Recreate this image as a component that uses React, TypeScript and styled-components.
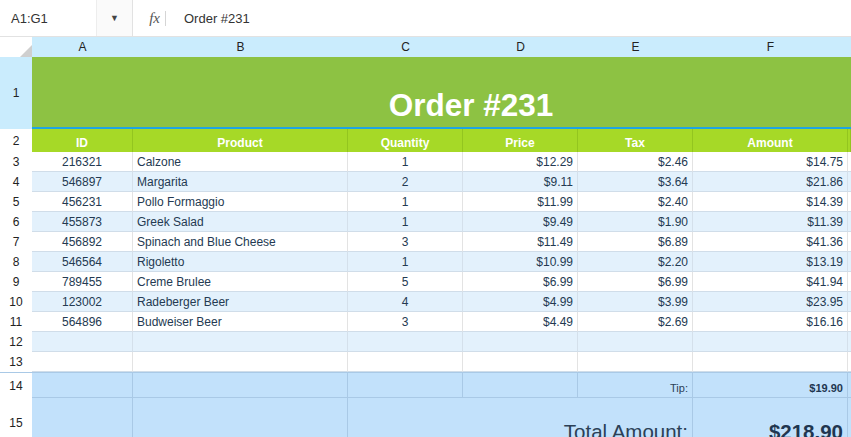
import React from "react";
import styled, { createGlobalStyle } from "styled-components";

const Global = createGlobalStyle`
  html, body { margin: 0; padding: 0; background: #fff; overflow: hidden; }
  body { font-family: "Liberation Sans", Arial, sans-serif; }
`;

const COLS = "32px 101px 215px 115px 115px 115px 155px 1fr";

const Page = styled.div`
  width: 851px;
  height: 437px;
  overflow: hidden;
  display: flex;
  flex-direction: column;
`;

const Toolbar = styled.div`
  height: 37px;
  flex: none;
  display: flex;
  align-items: stretch;
  border-bottom: 1px solid #e2e2e2;
  box-sizing: border-box;
  font-size: 13px;
  color: #333;
`;

const NameBox = styled.div`
  width: 96px;
  display: flex;
  align-items: center;
  padding-left: 11px;
  box-sizing: border-box;
`;

const Drop = styled.div`
  width: 37px;
  display: flex;
  align-items: center;
  justify-content: center;
  background: #fafafa;
  border-left: 1px solid #ededed;
  border-right: 1px solid #e2e2e2;
  box-sizing: border-box;
  font-size: 9px;
  color: #444;
`;

const Fx = styled.div`
  width: 33px;
  display: flex;
  align-items: center;
  justify-content: flex-end;
  font-family: "Liberation Serif", "Times New Roman", serif;
  font-style: italic;
  font-size: 15px;
  color: #555;
  gap: 5px;
  &::after {
    content: "";
    width: 1px;
    height: 15px;
    background: #d5d5d5;
  }
`;

const Formula = styled.div`
  display: flex;
  align-items: center;
  padding-left: 18px;
`;

const Sheet = styled.div`
  flex: 1;
  display: flex;
  flex-direction: column;
`;

const Row = styled.div<{ $h: number }>`
  display: grid;
  grid-template-columns: ${COLS};
  height: ${(p) => p.$h}px;
  flex: none;
`;

const Corner = styled.div`
  background: #fff;
  position: relative;
  &::after {
    content: "";
    position: absolute;
    right: 0;
    bottom: 0;
    border-style: solid;
    border-width: 0 0 12px 12px;
    border-color: transparent transparent #cfcfcf transparent;
  }
`;

const ColHead = styled.div`
  background: #caecfd;
  display: flex;
  align-items: center;
  justify-content: center;
  font-size: 12px;
  color: #222;
`;

const RowHead = styled.div<{ $sel?: boolean }>`
  background: ${(p) => (p.$sel ? "#caecfd" : "#fff")};
  display: flex;
  align-items: center;
  justify-content: center;
  font-size: 12px;
  color: #222;
`;

const TitleCell = styled.div`
  grid-column: 2 / 8;
  background: #8dc243;
  display: flex;
  align-items: flex-end;
  justify-content: center;
  padding-bottom: 3px;
  padding-left: 62px;
  box-sizing: border-box;
  color: #fff;
  font-weight: bold;
  font-size: 31.5px;
  border-bottom: 2px solid #1ea5e3;
`;

const Green = styled.div`
  background: #8dc243;
  border-bottom: 2px solid #1ea5e3;
`;

const HeadCell = styled.div`
  background: #a6d927;
  border-right: 1px solid #93c51f;
  display: flex;
  align-items: flex-end;
  justify-content: center;
  padding-bottom: 2px;
  box-sizing: border-box;
  color: #fff;
  font-weight: bold;
  font-size: 12px;
`;

type Align = "left" | "center" | "right";

const Cell = styled.div<{ $alt?: boolean; $align?: Align }>`
  background: ${(p) => (p.$alt ? "#e3f1fc" : "#fff")};
  border-right: 1px solid ${(p) => (p.$alt ? "#d4e0eb" : "#e3e3e3")};
  border-bottom: 1px solid #d0dde9;
  box-sizing: border-box;
  display: flex;
  align-items: flex-end;
  justify-content: ${(p) =>
    p.$align === "right" ? "flex-end" : p.$align === "center" ? "center" : "flex-start"};
  padding: 0 4px 2px 4px;
  font-size: 12px;
  color: #243a52;
  white-space: nowrap;
  overflow: hidden;
`;

const SumCell = styled.div<{ $span?: string; $align?: Align; $big?: boolean; $bold?: boolean }>`
  grid-column: ${(p) => p.$span || "auto"};
  background: #c2e1fb;
  border-right: 1px solid #a9c9e6;
  border-bottom: 1px solid #a9c9e6;
  box-sizing: border-box;
  display: flex;
  align-items: flex-end;
  justify-content: ${(p) => (p.$align === "right" ? "flex-end" : "flex-start")};
  padding: 0 4px 3px 4px;
  font-size: ${(p) => (p.$big ? "20.5px" : "11px")};
  font-weight: ${(p) => (p.$bold ? "bold" : "normal")};
  color: ${(p) => (p.$bold ? "#1f3650" : "#2b4056")};
  white-space: nowrap;
`;

const BigRow = styled(Row)`
  border-top: 1px solid #a9c9e6;
`;

const items = [
  ["216321", "Calzone", "1", "$12.29", "$2.46", "$14.75"],
  ["546897", "Margarita", "2", "$9.11", "$3.64", "$21.86"],
  ["456231", "Pollo Formaggio", "1", "$11.99", "$2.40", "$14.39"],
  ["455873", "Greek Salad", "1", "$9.49", "$1.90", "$11.39"],
  ["456892", "Spinach and Blue Cheese", "3", "$11.49", "$6.89", "$41.36"],
  ["546564", "Rigoletto", "1", "$10.99", "$2.20", "$13.19"],
  ["789455", "Creme Brulee", "5", "$6.99", "$6.99", "$41.94"],
  ["123002", "Radeberger Beer", "4", "$4.99", "$3.99", "$23.95"],
  ["564896", "Budweiser Beer", "3", "$4.49", "$2.69", "$16.16"],
  ["", "", "", "", "", ""],
  ["", "", "", "", "", ""],
];

const aligns: Align[] = ["center", "left", "center", "right", "right", "right", "left"];

export default function App() {
  return (
    <Page>
      <Global />
      <Toolbar>
        <NameBox>A1:G1</NameBox>
        <Drop>▼</Drop>
        <Fx>fx</Fx>
        <Formula>Order #231</Formula>
      </Toolbar>
      <Sheet>
        <Row $h={20}>
          <Corner />
          {["A", "B", "C", "D", "E", "F", "G"].map((c) => (
            <ColHead key={c}>{c === "G" ? "" : c}</ColHead>
          ))}
        </Row>
        <Row $h={72}>
          <RowHead $sel>1</RowHead>
          <TitleCell>Order #231</TitleCell>
          <Green />
        </Row>
        <Row $h={23}>
          <RowHead>2</RowHead>
          {["ID", "Product", "Quantity", "Price", "Tax", "Amount", ""].map((h, i) => (
            <HeadCell key={i}>{h}</HeadCell>
          ))}
        </Row>
        {items.map((r, i) => {
          const alt = i % 2 === 1;
          return (
            <Row $h={20} key={i}>
              <RowHead>{i + 3}</RowHead>
              {[...r, ""].map((v, j) => (
                <Cell key={j} $alt={alt} $align={aligns[j]}>
                  {v}
                </Cell>
              ))}
            </Row>
          );
        })}
        <BigRow $h={25}>
          <RowHead>14</RowHead>
          <SumCell />
          <SumCell />
          <SumCell />
          <SumCell />
          <SumCell $align="right">Tip:</SumCell>
          <SumCell $align="right" $bold>
            $19.90
          </SumCell>
          <SumCell />
        </BigRow>
        <Row $h={50}>
          <RowHead>15</RowHead>
          <SumCell />
          <SumCell />
          <SumCell $span="span 3" $align="right" $big>
            Total Amount:
          </SumCell>
          <SumCell $align="right" $big $bold>
            $218.90
          </SumCell>
          <SumCell />
        </Row>
      </Sheet>
    </Page>
  );
}
